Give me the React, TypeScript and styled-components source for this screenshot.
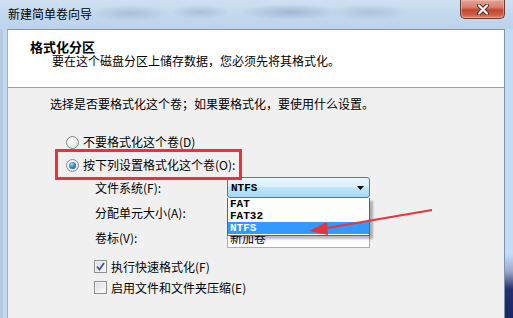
import React from "react";
import styled, { createGlobalStyle } from "styled-components";

const Global = createGlobalStyle`
  html, body { margin: 0; padding: 0; }
  body {
    width: 513px; height: 318px; overflow: hidden;
    font-family: "Noto Sans CJK SC", "Noto Sans", sans-serif;
    font-size: 12px; color: #000;
  }
`;

const Window = styled.div`
  position: relative;
  width: 513px; height: 318px;
  display: flex; flex-direction: column;
  background: #c3d8ee;
  overflow: hidden;
`;

const TitleBar = styled.div`
  height: 29px;
  flex: none;
  display: flex;
  align-items: flex-start;
  justify-content: space-between;
  background:
    radial-gradient(ellipse 40px 8px at 130px 13px, rgba(120,140,170,0.35), transparent),
    radial-gradient(ellipse 30px 7px at 200px 12px, rgba(120,140,170,0.35), transparent),
    radial-gradient(ellipse 50px 8px at 290px 12px, rgba(110,130,165,0.4), transparent),
    radial-gradient(ellipse 40px 8px at 370px 12px, rgba(120,140,170,0.3), transparent),
    linear-gradient(180deg, #cfe0f2 0%, #c1d7ee 60%, #bcd3eb 100%);
`;

const Title = styled.div`
  padding: 7px 0 0 8px;
  font-size: 12px;
  line-height: 14px;
  color: #000;
`;

const CloseButton = styled.div`
  width: 45px; height: 19px;
  margin-right: 8px;
  box-sizing: border-box;
  border: 1px solid #6a3a35;
  border-top: none;
  border-radius: 0 0 5px 5px;
  background: linear-gradient(180deg, #e2a595 0%, #d98070 40%, #c6452f 55%, #cc5a43 80%, #dd8a6a 100%);
  display: flex; align-items: center; justify-content: center;
  box-shadow: inset 0 0 0 1px rgba(255,200,190,0.45);
`;

const FrameRow = styled.div`
  flex: 1;
  display: flex;
  min-height: 0;
`;

const LeftEdge = styled.div`
  width: 7px; flex: none;
  background: linear-gradient(90deg, #bcd2ea 0px, #a9c1dd 2px, #c2d8ef 3px, #c5daef 7px);
`;

const RightEdge = styled.div`
  width: 8px; flex: none;
  background: linear-gradient(180deg, #c4dcf2 0%, #c4dcf2 78%, #9aa6c8 84%, #25306e 90%, #1c2468 100%);
`;

const Client = styled.div`
  flex: 1;
  display: flex; flex-direction: column;
  border: 1px solid #7e93ad;
  border-bottom: none;
  border-left-color: #9fb0c4;
  min-width: 0;
`;

const Header = styled.div`
  height: 58px;
  flex: none;
  background: #fff;
  border-bottom: 1px solid #a0a0a0;
  box-sizing: border-box;
  padding: 9px 0 0 22px;
`;

const HeaderTitle = styled.div`
  font-weight: bold;
  font-size: 13px;
  line-height: 15px;
`;

const HeaderSub = styled.div`
  margin-left: 22px;
  line-height: 14px;
`;

const Body = styled.div`
  position: relative;
  flex: 1;
  background: #f0f0f0;
  padding-left: 42px;
  display: flex; flex-direction: column;
`;

const Intro = styled.div`
  margin-top: 8px;
  line-height: 16px;
`;

const OptionRow = styled.div<{ $top: number; $indent: number; $h: number }>`
  margin-top: ${p => p.$top}px;
  margin-left: ${p => p.$indent}px;
  height: ${p => p.$h}px;
  display: flex; align-items: center; gap: 4px;
  line-height: 16px;
  white-space: nowrap;
`;

const Radio = styled.span<{ $checked?: boolean }>`
  width: 13px; height: 13px;
  box-sizing: border-box;
  border-radius: 50%;
  border: 1px solid #8a8a8a;
  background: radial-gradient(circle at 35% 35%, #ffffff 0%, #e8e8e8 60%, #d4d4d4 100%);
  display: flex; align-items: center; justify-content: center;
  flex: none;
  &::after {
    content: "";
    display: ${p => (p.$checked ? "block" : "none")};
    width: 7px; height: 7px; border-radius: 50%;
    background: radial-gradient(circle at 40% 35%, #a9dcf2 0%, #3a89bf 45%, #164d80 100%);
  }
`;

const CheckBox = styled.span<{ $checked?: boolean }>`
  width: 13px; height: 13px;
  box-sizing: border-box;
  border: 1px solid #8e8f8f;
  background: linear-gradient(135deg, #dcdcdc 0%, #f2f2f2 70%, #ffffff 100%);
  box-shadow: inset 0 0 0 1px #f4f4f4;
  display: flex; align-items: center; justify-content: center;
  flex: none;
`;

const FieldRow = styled.div<{ $top: number }>`
  margin-top: ${p => p.$top}px;
  margin-left: 45px;
  height: 21px;
  display: flex; align-items: center;
`;

const FieldLabel = styled.div`
  width: 132px;
  line-height: 16px;
  white-space: nowrap;
`;

const ControlBox = styled.div`
  position: relative;
  width: 143px; height: 21px;
`;

const Combo = styled.div<{ $hot?: boolean }>`
  width: 100%; height: 100%;
  box-sizing: border-box;
  border: 1px solid ${p => (p.$hot ? "#3c7fb1" : "#707070")};
  border-radius: 3px;
  background: ${p =>
    p.$hot
      ? "linear-gradient(180deg, #eaf6fd 0%, #d9f0fc 45%, #bee6fd 50%, #a7d9f5 100%)"
      : "linear-gradient(180deg, #f2f2f2 0%, #ebebeb 45%, #dddddd 50%, #cfcfcf 100%)"};
  display: flex; align-items: center; justify-content: space-between;
  padding: 0 5px 0 3px;
`;

const MonoText = styled.span<{ $light?: boolean }>`
  font-family: "Liberation Mono", "DejaVu Sans Mono", monospace;
  font-weight: bold;
  font-size: 11px;
  line-height: 12px;
  color: ${p => (p.$light ? "#fff" : "#000")};
`;

const DropList = styled.div`
  position: absolute;
  left: 0; top: 100%;
  width: 143px;
  box-sizing: border-box;
  border: 1px solid #646464;
  border-top: none;
  background: #fff;
  box-shadow: 3px 3px 2px rgba(0,0,0,0.28);
  z-index: 3;
  display: flex; flex-direction: column;
  padding-bottom: 1px;
`;

const ListItem = styled.div<{ $selected?: boolean }>`
  height: 12px;
  padding-left: 2px;
  display: flex; align-items: center;
  background: ${p => (p.$selected ? "#3399ff" : "transparent")};
`;

const TextBox = styled.div`
  width: 100%; height: 100%;
  box-sizing: border-box;
  border: 1px solid #abadb3;
  border-top-color: #e3e9ef;
  background: #fff;
  padding-left: 2px;
  display: flex; align-items: center;
  font-size: 12px;
  line-height: 14px;
`;

const Annotation = styled.div`
  position: absolute;
  left: 47px; top: 61px;
  width: 187px; height: 31px;
  box-sizing: border-box;
  border: 3px solid #e0363d;
  pointer-events: none;
  z-index: 4;
`;

const Overlay = styled.svg`
  position: absolute;
  left: 0; top: 0;
  width: 513px; height: 318px;
  pointer-events: none;
  z-index: 5;
`;

export default function App() {
  return (
    <>
      <Global />
      <Window>
        <TitleBar>
          <Title>新建简单卷向导</Title>
          <CloseButton>
            <svg width="14" height="11" viewBox="0 0 14 11">
              <path d="M3 1.5 L11 9.5 M11 1.5 L3 9.5" stroke="#5a2a25" strokeWidth="4" strokeLinecap="round" />
              <path d="M3 1.5 L11 9.5 M11 1.5 L3 9.5" stroke="#ffffff" strokeWidth="2.2" strokeLinecap="round" />
            </svg>
          </CloseButton>
        </TitleBar>
        <FrameRow>
          <LeftEdge />
          <Client>
            <Header>
              <HeaderTitle>格式化分区</HeaderTitle>
              <HeaderSub>要在这个磁盘分区上储存数据，您必须先将其格式化。</HeaderSub>
            </Header>
            <Body>
              <Intro>选择是否要格式化这个卷；如果要格式化，要使用什么设置。</Intro>
              <OptionRow $top={22} $indent={16} $h={16}>
                <Radio />
                <span>不要格式化这个卷(D)</span>
              </OptionRow>
              <OptionRow $top={7} $indent={16} $h={16}>
                <Radio $checked />
                <span>按下列设置格式化这个卷(O):</span>
              </OptionRow>
              <FieldRow $top={4}>
                <FieldLabel>文件系统(F):</FieldLabel>
                <ControlBox>
                  <Combo $hot>
                    <MonoText>NTFS</MonoText>
                    <svg width="7" height="4" viewBox="0 0 7 4">
                      <path d="M0 0 H7 L3.5 4 Z" fill="#000" />
                    </svg>
                  </Combo>
                  <DropList>
                    <ListItem><MonoText>FAT</MonoText></ListItem>
                    <ListItem><MonoText>FAT32</MonoText></ListItem>
                    <ListItem $selected><MonoText $light>NTFS</MonoText></ListItem>
                  </DropList>
                </ControlBox>
              </FieldRow>
              <FieldRow $top={4}>
                <FieldLabel>分配单元大小(A):</FieldLabel>
                <ControlBox>
                  <Combo />
                </ControlBox>
              </FieldRow>
              <FieldRow $top={4}>
                <FieldLabel>卷标(V):</FieldLabel>
                <ControlBox>
                  <TextBox>新加卷</TextBox>
                </ControlBox>
              </FieldRow>
              <OptionRow $top={10} $indent={44} $h={17}>
                <CheckBox $checked>
                  <svg width="9" height="9" viewBox="0 0 9 9">
                    <path d="M1 4.5 L3.5 7.5 L8 1" fill="none" stroke="#3b5a9a" strokeWidth="1.8" />
                  </svg>
                </CheckBox>
                <span>执行快速格式化(F)</span>
              </OptionRow>
              <OptionRow $top={4} $indent={44} $h={17}>
                <CheckBox />
                <span>启用文件和文件夹压缩(E)</span>
              </OptionRow>
              <Annotation />
            </Body>
          </Client>
          <RightEdge />
        </FrameRow>
        <Overlay viewBox="0 0 513 318">
          <path d="M432 210 L324 228.5" stroke="#e2383c" strokeWidth="2" fill="none" />
          <path d="M309 231 L327 222 L328 235 Z" fill="#e2383c" />
        </Overlay>
      </Window>
    </>
  );
}
